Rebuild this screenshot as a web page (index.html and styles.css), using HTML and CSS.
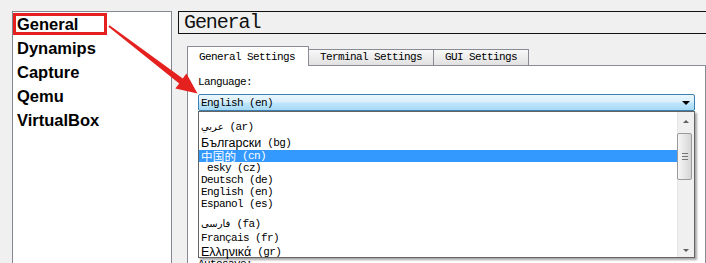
FILE: index.html
```html
<!DOCTYPE html>
<html lang="en">
<head>
    <meta charset="UTF-8">
    <meta name="viewport" content="width=device-width, initial-scale=1.0">
    <title>Preferences</title>
    <link rel="stylesheet" href="styles.css">
</head>
<body>
    <div class="window">
        <ul class="nav">
            <li class="nav-item">General</li>
            <li class="nav-item">Dynamips</li>
            <li class="nav-item">Capture</li>
            <li class="nav-item">Qemu</li>
            <li class="nav-item">VirtualBox</li>
        </ul>

        <div class="main">
            <div class="page-title">General</div>

            <div class="tabwidget">
                <div class="tabs">
                    <div class="tab active">General Settings</div>
                    <div class="tab">Terminal Settings</div>
                    <div class="tab">GUI Settings</div>
                </div>
                <div class="pane">
                    <div class="field-label">Language:</div>
                    <div class="combo">
                        <span>English (en)</span>
                        <span class="combo-arrow"></span>

                        <div class="popup">
                            <div class="options">
                                <div class="opt opt-ar"><span class="ar">عربي</span><span>&nbsp;(ar)</span></div>
                                <div class="opt opt-bg"><span class="sans">Български</span><span>&nbsp;(bg)</span></div>
                                <div class="opt selected"><span class="cjk">中国的</span><span>&nbsp;(cn)</span></div>
                                <div class="opt"><span>&nbsp;esky (cz)</span></div>
                                <div class="opt"><span>Deutsch (de)</span></div>
                                <div class="opt"><span>English (en)</span></div>
                                <div class="opt"><span>Espanol (es)</span></div>
                                <div class="opt opt-fa"><span class="ar">فارسی</span><span>&nbsp;(fa)</span></div>
                                <div class="opt opt-fr"><span>Français (fr)</span></div>
                                <div class="opt opt-gr"><span class="sans">Ελληνικά</span><span>&nbsp;(gr)</span></div>
                            </div>
                            <div class="scrollbar">
                                <div class="sb-btn sb-up"><span class="arrow-up"></span></div>
                                <div class="sb-thumb"><span class="grip"></span></div>
                                <div class="sb-space"></div>
                                <div class="sb-btn sb-down"><span class="arrow-down"></span></div>
                            </div>
                        </div>
                    </div>
                    <div class="field-label next">Autosave:</div>
                </div>
            </div>
        </div>
    </div>

    <!-- annotation drawn over the screenshot -->
    <svg class="annot" width="706" height="263" viewBox="0 0 706 263">
        <rect x="14.5" y="14.5" width="91" height="19" fill="none" stroke="#e5211f" stroke-width="3"/>
        <polygon fill="#e5211f" points="109.5,25.2 182.8,78.6 186.4,73.4 197.5,93.5 175.4,88.4 179.2,83.4 108.4,26.8"/>
    </svg>
</body>
</html>
```

FILE: styles.css
```css
body {
    margin: 0;
    width: 706px;
    height: 263px;
    overflow: hidden;
    background-color: #f0f0f0;
    font-family: "Liberation Mono", monospace;
}
.window {
    display: flex;
    padding: 11px 0 0 12px;
}
.nav {
    box-sizing: border-box;
    width: 160px;
    height: 270px;
    margin: 0;
    padding: 0 0 0 4px;
    list-style: none;
    background: white;
    border: 1px solid #828790;
}
.nav-item {
    font-family: "Liberation Sans", Arial, sans-serif;
    font-weight: bold;
    font-size: 16.5px;
    line-height: 24px;
    color: #000;
}
.main {
    flex: 1;
    margin-left: 6px;
}
.page-title {
    box-sizing: border-box;
    height: 23px;
    margin-right: -20px;
    padding-left: 5px;
    border: 1px solid #111;
    font-size: 20px;
    letter-spacing: -1.1px;
    line-height: 21px;
    color: #111;
}
.tabwidget {
    width: 519px;
    margin: 12px 0 0 9px;
}
.tabs {
    display: flex;
    align-items: flex-end;
    height: 19px;
}
.tab {
    box-sizing: border-box;
    height: 16px;
    padding: 0 11px;
    border: 1px solid #898c95;
    border-bottom: none;
    background: linear-gradient(#f8f8f8, #e1e1e1);
    font-size: 11px;
    letter-spacing: -0.6px;
    line-height: 15px;
    white-space: nowrap;
}
.tab + .tab {
    margin-left: -1px;
}
.tab.active {
    position: relative;
    z-index: 1;
    height: 20px;
    margin-bottom: -1px;
    padding: 3px 13px 0 11px;
    background: white;
    line-height: 14px;
}
.pane {
    box-sizing: border-box;
    height: 210px;
    padding: 10px 10px 0 10px;
    background: white;
    border: 1px solid #898c95;
}
.field-label {
    font-size: 11px;
    letter-spacing: -0.6px;
    line-height: 12px;
}
.field-label.next {
    margin-top: 147px;
}
.combo {
    position: relative;
    box-sizing: border-box;
    display: flex;
    align-items: center;
    justify-content: space-between;
    height: 17px;
    margin-top: 6px;
    padding: 0 4px 0 2px;
    border: 1px solid #3c7fb1;
    border-radius: 2px;
    background: linear-gradient(#eaf6fd, #d9f0fc 45%, #bee6fd 55%, #a7d9f5);
    font-size: 11px;
    letter-spacing: -0.6px;
    line-height: 12px;
}
.combo-arrow {
    width: 0;
    height: 0;
    margin-top: 1px;
    border-left: 4px solid transparent;
    border-right: 4px solid transparent;
    border-top: 4px solid #000;
}
.popup {
    position: absolute;
    z-index: 5;
    left: -1px;
    top: calc(100% + 1px);
    box-sizing: border-box;
    display: flex;
    width: 497px;
    height: 147px;
    background: white;
    border: 1px solid #646464;
    box-shadow: 2px 2px 2px rgba(0,0,0,0.35);
    letter-spacing: -0.6px;
}
.options {
    flex: 1;
}
.opt {
    box-sizing: border-box;
    display: flex;
    align-items: flex-start;
    height: 12px;
    padding-left: 2px;
    white-space: nowrap;
}
.opt span {
    line-height: 12px;
}
.opt-ar {
    height: 23px;
    padding-top: 9px;
}
.opt-bg {
    height: 15px;
    padding-top: 2px;
}
.opt-fa {
    height: 20px;
    padding-top: 8px;
}
.opt-fr {
    height: 15px;
    padding-top: 2px;
}
.opt-gr {
    padding-top: 1px;
}
.opt.selected {
    background-color: #3399ff;
    color: white;
}
.ar {
    font-family: "DejaVu Sans", sans-serif;
    font-size: 10px;
    letter-spacing: 0;
}
.sans {
    font-family: "Liberation Sans", Arial, sans-serif;
    font-size: 12.5px;
    letter-spacing: 0;
}
.cjk {
    height: 12px;
    overflow: hidden;
    font-family: "Noto Sans CJK SC", sans-serif;
    font-size: 11.5px;
    letter-spacing: 0.2px;
}
.scrollbar {
    display: flex;
    flex-direction: column;
    width: 16px;
    background: #f0f0f0;
    border-left: 1px solid #e6e6e6;
}
.sb-btn {
    display: flex;
    align-items: center;
    justify-content: center;
}
.sb-up {
    height: 19px;
}
.sb-down {
    height: 14px;
}
.arrow-up, .arrow-down {
    width: 0;
    height: 0;
    border-left: 3px solid transparent;
    border-right: 3px solid transparent;
}
.arrow-up {
    border-bottom: 3px solid #606060;
}
.arrow-down {
    border-top: 3px solid #606060;
}
.sb-thumb {
    box-sizing: border-box;
    display: flex;
    align-items: center;
    justify-content: center;
    width: 15px;
    height: 47px;
    margin-top: 2px;
    margin-left: -1px;
    border: 1px solid #9a9a9a;
    border-radius: 2px;
    background: linear-gradient(to right, #f6f6f6, #e6e6e6 50%, #d5d5d5);
}
.grip {
    width: 6px;
    height: 5px;
    border-top: 1px solid #777;
    border-bottom: 1px solid #777;
    background: linear-gradient(transparent 2px, #777 2px, #777 3px, transparent 3px);
}
.sb-space {
    flex: 1;
}
.annot {
    position: absolute;
    top: 0;
    left: 0;
    pointer-events: none;
}
```
